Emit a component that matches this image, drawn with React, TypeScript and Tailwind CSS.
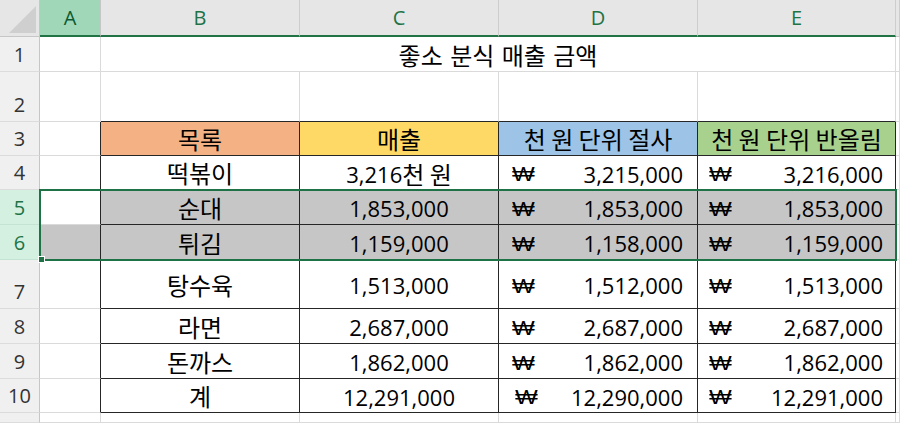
import React from "react";

const KR = "font-['Noto_Sans_CJK_KR',sans-serif]";
const NUM = "font-['Open_Sans','Noto_Sans_CJK_KR',sans-serif]";

function Kr({ children }: { children: React.ReactNode }) {
  return <span className={`${KR} text-[24px] leading-none text-black`}>{children}</span>;
}
function Num({ children }: { children: React.ReactNode }) {
  return <span className={`${NUM} text-[22px] leading-none text-black`}>{children}</span>;
}
function Won() {
  return (
    <span className="inline-block font-['Liberation_Sans',sans-serif] text-[21px] leading-none text-black scale-x-[1.15] origin-left">
      ₩
    </span>
  );
}

const GRID = "border-r border-b border-[#dadada]";
const TBL = "border-r border-b border-[#262626]";

type Row = { n: number; b: string; c: React.ReactNode; d: string; e: string };

const data: Row[] = [
  { n: 4, b: "떡볶이", c: <><Num>3,216</Num><Kr>천 원</Kr></>, d: "3,215,000", e: "3,216,000" },
  { n: 5, b: "순대", c: <Num>1,853,000</Num>, d: "1,853,000", e: "1,853,000" },
  { n: 6, b: "튀김", c: <Num>1,159,000</Num>, d: "1,158,000", e: "1,159,000" },
  { n: 7, b: "탕수육", c: <Num>1,513,000</Num>, d: "1,512,000", e: "1,513,000" },
  { n: 8, b: "라면", c: <Num>2,687,000</Num>, d: "2,687,000", e: "2,687,000" },
  { n: 9, b: "돈까스", c: <Num>1,862,000</Num>, d: "1,862,000", e: "1,862,000" },
  { n: 10, b: "계", c: <Num>12,291,000</Num>, d: "12,290,000", e: "12,291,000" },
];

function RowHead({ n, sel }: { n?: number; sel?: boolean }) {
  return (
    <div
      className={`flex items-end justify-center pb-[6px] border-r border-b ${
        sel ? "bg-[#d3f0e0] border-r-[#c6c6c6] border-b-[#c4e3d2] text-[#217346]" : "bg-[#f0f0f0] border-r-[#c6c6c6] border-b-[#dcdcdc] text-[#333333]"
      } font-['Open_Sans',sans-serif] text-[20px] leading-none overflow-hidden`}
    >
      {n}
    </div>
  );
}

function ColHead({ l, active, last }: { l: string; active?: boolean; last?: boolean }) {
  return (
    <div
      className={`flex items-center justify-center border-r ${
        active ? "bg-[#a0d7b8] text-[#0e5a30] border-r-[#c6c6c6]" : "bg-[#e6e6e6] text-[#217346] border-r-[#cdcdcd]"
      } ${last ? "border-b border-b-[#c6c6c6]" : "border-b-2 border-b-[#217346]"} font-['Open_Sans',sans-serif] text-[20px] leading-none`}
    >
      {l}
    </div>
  );
}

export default function App() {
  return (
    <div className="relative w-[900px] h-[423px] overflow-hidden bg-white">
      <div className="grid w-[900px] h-[423px] grid-cols-[40px_61px_199px_199px_199px_198px_1fr] grid-rows-[37px_35px_50px_34px_34px_35px_35px_49px_35px_35px_34px_1fr]">
        {/* header row */}
        <div className="relative bg-[#e6e6e6] border-r border-b border-[#c6c6c6]">
          <svg className="absolute left-0 top-0" width="40" height="37" viewBox="0 0 40 37">
            <polygon points="36,6 36,33 9,33" fill="#cfcfcf" />
          </svg>
        </div>
        <ColHead l="A" active />
        <ColHead l="B" />
        <ColHead l="C" />
        <ColHead l="D" />
        <ColHead l="E" />
        <ColHead l="" last />

        {/* row 1 */}
        <RowHead n={1} />
        <div className={GRID} />
        <div className={`col-span-4 flex items-center justify-center pt-[2px] ${GRID}`}>
          <span className={`${KR} text-[24px] leading-none text-black [word-spacing:2px]`}>좋소 분식 매출 금액</span>
        </div>
        <div className={GRID} />

        {/* row 2 */}
        <RowHead n={2} />
        <div className={GRID} />
        <div className="border-r border-r-[#dadada] border-b border-b-[#262626]" />
        <div className="border-r border-r-[#dadada] border-b border-b-[#262626]" />
        <div className="border-r border-r-[#dadada] border-b border-b-[#262626]" />
        <div className="border-r border-r-[#dadada] border-b border-b-[#262626]" />
        <div className={GRID} />

        {/* row 3 */}
        <RowHead n={3} />
        <div className="border-r border-r-[#262626] border-b border-b-[#dadada]" />
        <div className={`flex items-center justify-center pt-[1px] bg-[#f4b183] ${TBL}`}>
          <Kr>목록</Kr>
        </div>
        <div className={`flex items-center justify-center pt-[1px] bg-[#ffd966] ${TBL}`}>
          <Kr>매출</Kr>
        </div>
        <div className={`flex items-center justify-center pt-[1px] bg-[#9dc3e6] ${TBL}`}>
          <Kr>천 원 단위 절사</Kr>
        </div>
        <div className={`flex items-center justify-center pt-[1px] bg-[#a9d18e] ${TBL}`}>
          <Kr>천 원 단위 반올림</Kr>
        </div>
        <div className={GRID} />

        {data.map((r) => {
          const sel = r.n === 5 || r.n === 6;
          const bg = sel ? "bg-[#c6c6c6]" : "bg-white";
          const aBg = r.n === 6 ? "bg-[#c6c6c6]" : "bg-white";
          const dPad = r.n === 10 ? "pl-[16px]" : "pl-[13px]";
          return (
            <React.Fragment key={r.n}>
              <RowHead n={r.n} sel={sel} />
              <div className={`${aBg} border-r border-r-[#262626] border-b border-b-[#dadada]`} />
              <div className={`flex items-center justify-center pt-[1px] ${bg} ${TBL}`}>
                <Kr>{r.b}</Kr>
              </div>
              <div className={`flex items-center justify-center pt-[2px] ${bg} ${TBL}`}>
                {r.c}
              </div>
              <div className={`flex items-center justify-between ${dPad} pr-[14px] pt-[2px] ${bg} ${TBL}`}>
                <Won />
                <Num>{r.d}</Num>
              </div>
              <div className={`flex items-center justify-between pl-[11px] pr-[12px] pt-[2px] ${bg} ${TBL}`}>
                <Won />
                <Num>{r.e}</Num>
              </div>
              <div className={GRID} />
            </React.Fragment>
          );
        })}

        {/* row 11 */}
        <RowHead />
        <div className={GRID} />
        <div className={GRID} />
        <div className={GRID} />
        <div className={GRID} />
        <div className={GRID} />
        <div className={GRID} />
      </div>

      {/* selection */}
      <div className="pointer-events-none absolute left-[39px] top-[189px] w-[858px] h-[72px] border-2 border-[#1f7246]" />
      <div className="pointer-events-none absolute left-[38px] top-[256px] w-[7px] h-[7px] bg-[#1f7246] border border-white" />
    </div>
  );
}
